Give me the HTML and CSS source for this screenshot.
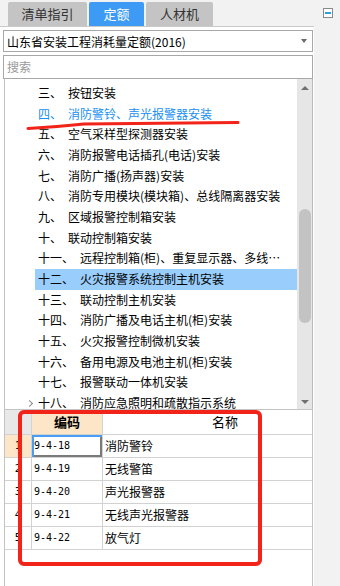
FILE: index.html
```html
<!DOCTYPE html>
<html lang="zh-CN">
<head>
    <meta charset="UTF-8">
    <meta name="viewport" content="width=device-width, initial-scale=1.0">
    <title>定额</title>
    <link rel="stylesheet" href="styles.css">
</head>
<body>
<div class="app">
    <div class="main">
        <div class="tabs">
            <div class="tab tab-list">清单指引</div>
            <div class="tab tab-quota active">定额</div>
            <div class="tab tab-res">人材机</div>
        </div>

        <div class="panel">
            <div class="select">山东省安装工程消耗量定额(2016)<span class="caret"></span></div>
            <div class="search">搜索</div>

            <!-- 章节树 -->
            <div class="tree">
                <div class="tree-list">
                    <div class="node"><span class="num">三、</span>按钮安装</div>
                    <div class="node cur"><span class="num">四、</span>消防警铃、声光报警器安装</div>
                    <div class="node"><span class="num">五、</span>空气采样型探测器安装</div>
                    <div class="node"><span class="num">六、</span>消防报警电话插孔(电话)安装</div>
                    <div class="node"><span class="num">七、</span>消防广播(扬声器)安装</div>
                    <div class="node"><span class="num">八、</span>消防专用模块(模块箱)、总线隔离器安装</div>
                    <div class="node"><span class="num">九、</span>区域报警控制箱安装</div>
                    <div class="node"><span class="num">十、</span>联动控制箱安装</div>
                    <div class="node"><span class="num">十一、</span>远程控制箱(柜)、重复显示器、多线…</div>
                    <div class="node sel"><span class="num">十二、</span>火灾报警系统控制主机安装</div>
                    <div class="node"><span class="num">十三、</span>联动控制主机安装</div>
                    <div class="node"><span class="num">十四、</span>消防广播及电话主机(柜)安装</div>
                    <div class="node"><span class="num">十五、</span>火灾报警控制微机安装</div>
                    <div class="node"><span class="num">十六、</span>备用电源及电池主机(柜)安装</div>
                    <div class="node"><span class="num">十七、</span>报警联动一体机安装</div>
                    <div class="node fold"><span class="num">十八、</span>消防应急照明和疏散指示系统</div>
                </div>
                <div class="vscroll">
                    <span class="arrow-up"></span>
                    <span class="thumb"></span>
                    <span class="arrow-down"></span>
                </div>
            </div>

            <!-- 子目表 -->
            <div class="grid">
                <div class="row head">
                    <div class="cell idx"></div>
                    <div class="cell code">编码</div>
                    <div class="cell name">名称</div>
                </div>
                <div class="row">
                    <div class="cell idx on">1</div>
                    <div class="cell code picked">9-4-18</div>
                    <div class="cell name">消防警铃</div>
                </div>
                <div class="row">
                    <div class="cell idx">2</div>
                    <div class="cell code">9-4-19</div>
                    <div class="cell name">无线警笛</div>
                </div>
                <div class="row">
                    <div class="cell idx">3</div>
                    <div class="cell code">9-4-20</div>
                    <div class="cell name">声光报警器</div>
                </div>
                <div class="row">
                    <div class="cell idx">4</div>
                    <div class="cell code">9-4-21</div>
                    <div class="cell name">无线声光报警器</div>
                </div>
                <div class="row">
                    <div class="cell idx">5</div>
                    <div class="cell code">9-4-22</div>
                    <div class="cell name">放气灯</div>
                </div>
            </div>
        </div>
    </div>

    <div class="side">
        <span class="collapse"></span>
    </div>

    <!-- 红色标注 -->
    <svg class="marks" width="340" height="586" viewBox="0 0 340 586">
        <path d="M28 128.5 C45 127.5 65 126 84 124 L238 122.5" fill="none" stroke="#f2241a" stroke-width="3" stroke-linecap="round"/>
        <rect x="20" y="412" width="240" height="152" rx="4" fill="none" stroke="#f2241a" stroke-width="4"/>
    </svg>
</div>
</body>
</html>
```

FILE: styles.css
```css
body {
    margin: 0;
    background-color: #f2f2f2;
    font-family: "Noto Sans CJK SC", sans-serif;
    font-size: 12px;
    color: #000;
}

.app {
    position: relative;
    display: flex;
    height: 586px;
    overflow: hidden;
}

.main {
    width: 314px;
    display: flex;
    flex-direction: column;
}

/* 顶部页签 */
.tabs {
    height: 26px;
    box-sizing: border-box;
    display: flex;
    align-items: flex-end;
    gap: 2px;
    padding-left: 8px;
}

.tab {
    height: 24px;
    line-height: 24px;
    text-align: center;
    background-color: #c4c4c4;
    color: #333;
    font-size: 13px;
    border-radius: 2px 2px 0 0;
}

.tab-list { width: 79px; }
.tab-quota { width: 55px; }
.tab-res { width: 67px; }

.tab.active {
    background-color: #3d9bf6;
    color: #fff;
}

.panel {
    flex: 1;
    min-height: 0;
    background-color: #fff;
    border-top: 1px solid #c9c9c9;
    padding: 3px 1px 0 3px;
    display: flex;
    flex-direction: column;
}

.select {
    height: 22px;
    box-sizing: border-box;
    border: 1px solid #a8a8a8;
    display: flex;
    align-items: center;
    padding-left: 3px;
}

.caret {
    margin-left: auto;
    margin-right: 5px;
    border-left: 3.5px solid transparent;
    border-right: 3.5px solid transparent;
    border-top: 4px solid #6b6b6b;
}

.search {
    margin-top: 3px;
    height: 24px;
    box-sizing: border-box;
    border: 1px solid #a8a8a8;
    padding-left: 3px;
    line-height: 22px;
    color: #9a9a9a;
}

/* 树 */
.tree {
    flex: none;
    height: 330px;
    margin-left: 1px;
    display: flex;
    border-left: 1px solid #c4c4c4;
    border-right: 1px solid #b9b9b9;
}

.tree-list {
    flex: 1;
    overflow: hidden;
    padding-top: 4px;
}

.node {
    position: relative;
    margin-left: 30px;
    padding-left: 3px;
    height: 20.67px;
    line-height: 20.67px;
    white-space: nowrap;
}

.node.cur {
    color: #1a8ff2;
}

.node.sel {
    background-color: #99cdfb;
}

.node.fold::before {
    content: "";
    position: absolute;
    left: -8px;
    top: 8px;
    width: 4px;
    height: 4px;
    border-right: 1.5px solid #8a8a8a;
    border-top: 1.5px solid #8a8a8a;
    transform: rotate(45deg);
}

.num {
    margin-right: 6px;
}

.vscroll {
    width: 15px;
    background-color: #e6e6e6;
    display: flex;
    flex-direction: column;
    align-items: center;
}

.arrow-up {
    margin-top: 7px;
    border-left: 4px solid transparent;
    border-right: 4px solid transparent;
    border-bottom: 4px solid #707070;
}

.thumb {
    margin-top: 119px;
    width: 12px;
    height: 114px;
    border-radius: 6px;
    background-color: #c3c3c3;
}

.arrow-down {
    margin-top: auto;
    margin-bottom: 5px;
    border-left: 4px solid transparent;
    border-right: 4px solid transparent;
    border-top: 4px solid #707070;
}

/* 表格 */
.grid {
    flex: 1;
    margin-left: 1px;
    border: 1px solid #c4c4c4;
    border-bottom: none;
}

.row {
    display: grid;
    grid-template-columns: 27px 71px 1fr;
    height: 23px;
}

.row.head {
    height: 25px;
}

.cell {
    box-sizing: border-box;
    border-right: 1px solid #d2d2d2;
    border-bottom: 1px solid #d2d2d2;
    line-height: 22px;
    white-space: nowrap;
    overflow: hidden;
}

.cell.name {
    border-right: none;
    padding-left: 2px;
}

.head .cell {
    line-height: 24px;
}

.head .idx {
    background-color: #e8e8e8;
}

.head .code {
    background-color: #fde5c8;
    font-family: "Noto Sans CJK SC", sans-serif;
    font-size: 13px;
    font-weight: bold;
    text-align: center;
    padding-left: 0;
}

.head .name {
    padding-left: 109px;
    font-size: 13px;
}

.idx {
    text-align: center;
    font-family: "DejaVu Sans Mono", monospace;
    font-size: 11px;
}

.idx.on {
    background-color: #fde5c8;
}

.code {
    padding-left: 2px;
    font-family: "DejaVu Sans Mono", monospace;
    font-size: 10px;
}

.code.picked {
    box-shadow: inset 2px 2px 0 #4a9ef2, inset -2px -2px 0 #7a7a7a;
}

.side {
    flex: 1;
    background-color: #f2f2f2;
}

.collapse {
    display: block;
    position: relative;
    margin: 8px 0 0 9px;
    width: 10px;
    height: 10px;
    box-sizing: border-box;
    border: 1px solid #8a8a8a;
    background-color: #fff;
}

.collapse::after {
    content: "";
    position: absolute;
    left: 1px;
    top: 3px;
    width: 6px;
    height: 2px;
    background-color: #2aa0dc;
}

.marks {
    position: absolute;
    left: 0;
    top: 0;
    pointer-events: none;
}
```
